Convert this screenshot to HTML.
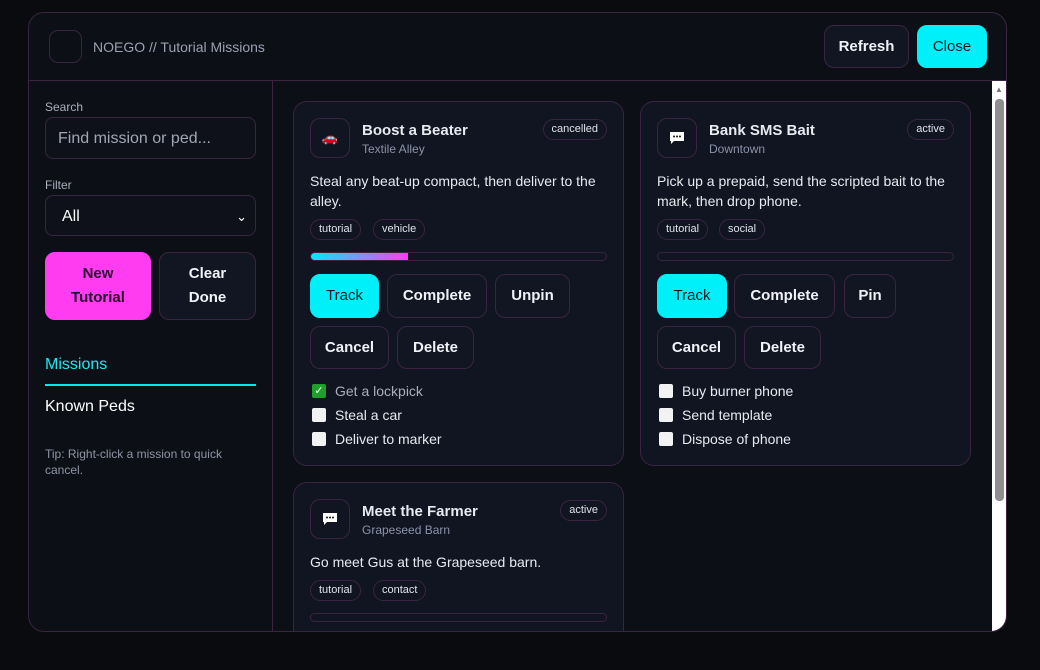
<!DOCTYPE html>
<html><head><style>
*{box-sizing:border-box;margin:0;padding:0}
body{width:1040px;height:670px;background:#0a0b0f;font-family:"Liberation Sans",sans-serif;color:#e8eaf0;position:relative;overflow:hidden}
.a{position:absolute}
.panel{left:28px;top:12px;width:979px;height:620px;background:#0d0f16;border:1px solid #3a2442;border-radius:16px;overflow:hidden}
.btn{position:absolute;border:1px solid #3a2442;background:#121522;border-radius:10px;color:#f0f2f8;font-weight:bold;font-size:15px;display:flex;align-items:center;justify-content:center;text-align:center;line-height:24px}
.cy{background:#00f0fa;color:#0a1a22;border-color:#00f0fa}
.card{position:absolute;width:331px;background:#111421;border:1px solid #3a2442;border-radius:14px}
.ic{position:absolute;left:16px;top:16px;width:40px;height:40px;border:1px solid #3a2442;border-radius:10px;display:flex;align-items:center;justify-content:center}
.t{position:absolute;left:68px;top:20px;font-weight:bold;font-size:15px}
.s{position:absolute;left:68px;top:40px;font-size:12px;color:#8a94a8}
.bd{position:absolute;right:16px;top:17px;height:21px;padding:0 8px;border:1px solid #3a2442;border-radius:11px;font-size:11px;line-height:19px;color:#dfe3ea}
.d{position:absolute;left:16px;top:69px;width:300px;font-size:14px;line-height:20px}
.tg{position:absolute;top:117px;height:21px;padding:0 8px;border:1px solid #3a2442;border-radius:11px;font-size:11px;line-height:19px;color:#dfe3ea}
.pb{position:absolute;left:16px;top:150px;width:297px;height:9px;border:1px solid #3a2442;border-radius:5px;overflow:hidden}
.ck{position:absolute;left:18px;font-size:14px;display:flex;align-items:center}
.bx{width:14px;height:14px;background:#f2f2f2;border-radius:2px;margin-right:9px}
</style></head><body>
<div class="a panel">
 <div class="a" style="left:0;top:0;width:979px;height:68px;border-bottom:1px solid #3a2442"></div>
 <div class="a" style="left:20px;top:17px;width:33px;height:33px;border:1px solid #3a2442;border-radius:9px"></div>
 <div class="a" style="left:64px;top:26px;font-size:14px;color:#9aa1b2">NOEGO // Tutorial Missions</div>
 <div class="btn" style="left:795px;top:12px;width:85px;height:43px">Refresh</div>
 <div class="btn cy" style="left:888px;top:12px;width:70px;height:43px;font-weight:normal">Close</div>
 <div class="a" style="left:243px;top:68px;width:1px;height:560px;background:#3a2442"></div>
 <div class="a" style="left:16px;top:87px;font-size:12px;color:#a8afbd">Search</div>
 <div class="a" style="left:16px;top:104px;width:211px;height:42px;border:1px solid #3a2442;border-radius:8px;background:#0f111a;font-size:16px;color:#a0a6b4;padding:12px 12px">Find mission or ped...</div>
 <div class="a" style="left:16px;top:165px;font-size:12px;color:#a8afbd">Filter</div>
 <div class="a" style="left:16px;top:182px;width:211px;height:41px;border:1px solid #3a2442;border-radius:8px;background:#0f111a;font-size:16px;color:#fff;padding:12px 16px">All<span style="position:absolute;right:8px;top:13px;font-size:13px">&#8964;</span></div>
 <div class="btn" style="left:16px;top:239px;width:106px;height:68px;background:#ff3cf0;border-color:#ff3cf0;color:#2a0a30">New<br>Tutorial</div>
 <div class="btn" style="left:130px;top:239px;width:97px;height:68px">Clear<br>Done</div>
 <div class="a" style="left:16px;top:343px;font-size:16px;color:#22e6f0">Missions</div>
 <div class="a" style="left:16px;top:371px;width:211px;height:2px;background:#00eaf5"></div>
 <div class="a" style="left:16px;top:385px;font-size:16px;color:#fff">Known Peds</div>
 <div class="a" style="left:16px;top:433px;width:200px;font-size:12px;line-height:16px;color:#8d95a6">Tip: Right-click a mission to quick cancel.</div>
 <div class="a" style="left:963px;top:68px;width:16px;height:552px;background:#fff"></div>
 <div class="a" style="left:966px;top:86px;width:9px;height:402px;background:#8e8e8e;border-radius:4px"></div>
 <div class="a" style="left:966px;top:72px;font-size:8px;color:#777">&#9650;</div>
</div>

<div class="card" style="left:293px;top:101px;height:365px">
 <div class="ic"><span style="font-size:13px">🚗</span></div>
 <div class="t">Boost a Beater</div><div class="s">Textile Alley</div>
 <div class="bd">cancelled</div>
 <div class="d">Steal any beat-up compact, then deliver to the alley.</div>
 <div class="tg" style="left:16px">tutorial</div><div class="tg" style="left:79px">vehicle</div>
 <div class="pb"><div style="width:33%;height:100%;background:linear-gradient(90deg,#00eaff,#ff3cf0)"></div></div>
 <div class="btn cy" style="left:16px;top:172px;width:69px;height:44px;font-weight:normal">Track</div>
 <div class="btn" style="left:93px;top:172px;width:100px;height:44px">Complete</div>
 <div class="btn" style="left:201px;top:172px;width:75px;height:44px">Unpin</div>
 <div class="btn" style="left:16px;top:224px;width:79px;height:43px">Cancel</div>
 <div class="btn" style="left:103px;top:224px;width:77px;height:43px">Delete</div>
 <div class="ck" style="top:281px;color:#a8aebb"><span class="bx" style="background:#1fa02a;color:#fff;font-size:11px;line-height:14px;text-align:center">✓</span>Get a lockpick</div>
 <div class="ck" style="top:305px"><span class="bx"></span>Steal a car</div>
 <div class="ck" style="top:329px"><span class="bx"></span>Deliver to marker</div>
</div>

<div class="card" style="left:640px;top:101px;height:365px">
 <div class="ic"><svg width="16" height="14" viewBox="0 0 16 14"><path d="M1 1h14v9H5l-3 3v-3H1z" fill="#fff"/><circle cx="5" cy="5.5" r="1" fill="#111"/><circle cx="8" cy="5.5" r="1" fill="#111"/><circle cx="11" cy="5.5" r="1" fill="#111"/></svg></div>
 <div class="t">Bank SMS Bait</div><div class="s">Downtown</div>
 <div class="bd">active</div>
 <div class="d">Pick up a prepaid, send the scripted bait to the mark, then drop phone.</div>
 <div class="tg" style="left:16px">tutorial</div><div class="tg" style="left:78px">social</div>
 <div class="pb"></div>
 <div class="btn cy" style="left:16px;top:172px;width:70px;height:44px;font-weight:normal">Track</div>
 <div class="btn" style="left:93px;top:172px;width:101px;height:44px">Complete</div>
 <div class="btn" style="left:203px;top:172px;width:52px;height:44px">Pin</div>
 <div class="btn" style="left:16px;top:224px;width:79px;height:43px">Cancel</div>
 <div class="btn" style="left:103px;top:224px;width:77px;height:43px">Delete</div>
 <div class="ck" style="top:281px"><span class="bx"></span>Buy burner phone</div>
 <div class="ck" style="top:305px"><span class="bx"></span>Send template</div>
 <div class="ck" style="top:329px"><span class="bx"></span>Dispose of phone</div>
</div>

<div class="a" style="left:273px;top:482px;width:718px;height:149px;overflow:hidden">
<div class="card" style="left:20px;top:0;height:200px">
 <div class="ic"><svg width="16" height="14" viewBox="0 0 16 14"><path d="M1 1h14v9H5l-3 3v-3H1z" fill="#fff"/><circle cx="5" cy="5.5" r="1" fill="#111"/><circle cx="8" cy="5.5" r="1" fill="#111"/><circle cx="11" cy="5.5" r="1" fill="#111"/></svg></div>
 <div class="t">Meet the Farmer</div><div class="s">Grapeseed Barn</div>
 <div class="bd">active</div>
 <div class="d">Go meet Gus at the Grapeseed barn.</div>
 <div class="tg" style="left:16px;top:97px">tutorial</div><div class="tg" style="left:79px;top:97px">contact</div>
 <div class="pb" style="top:130px"></div>
</div>
</div>
</body></html>
